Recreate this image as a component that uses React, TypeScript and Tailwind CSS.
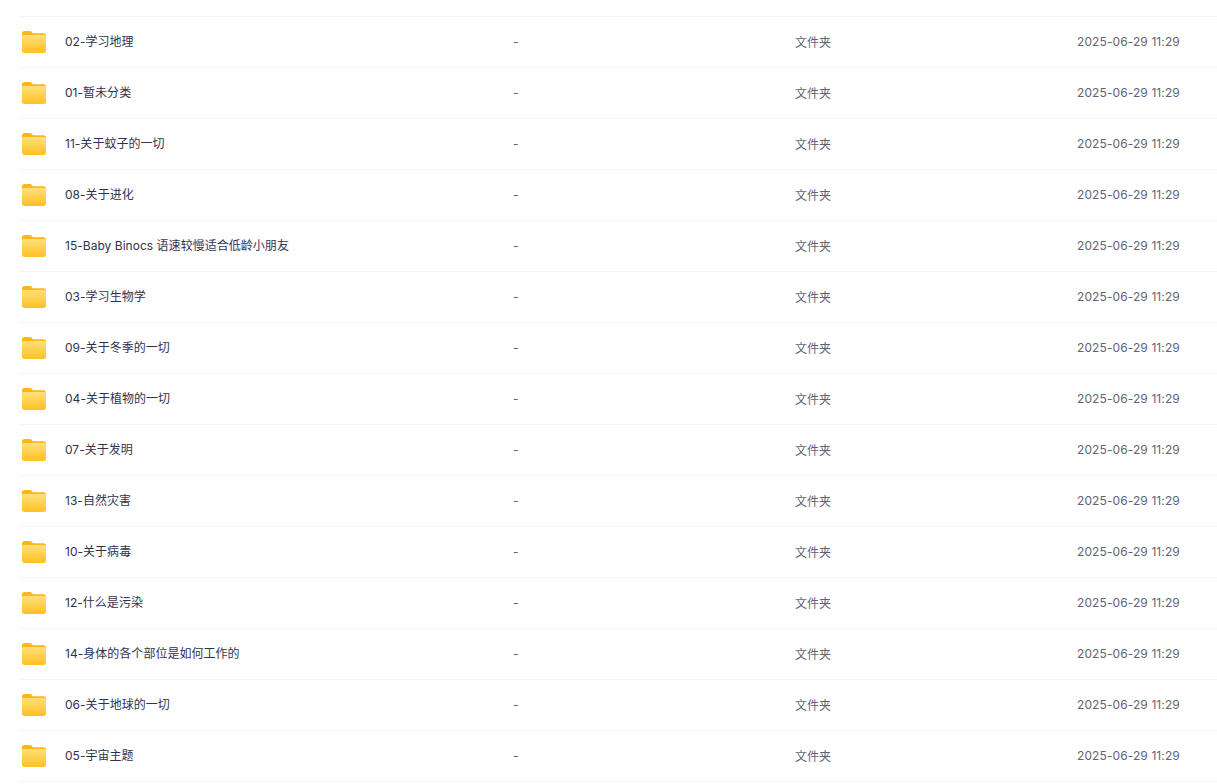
const FOLDERS = [
  "02-学习地理",
  "01-暂未分类",
  "11-关于蚊子的一切",
  "08-关于进化",
  "15-Baby Binocs 语速较慢适合低龄小朋友",
  "03-学习生物学",
  "09-关于冬季的一切",
  "04-关于植物的一切",
  "07-关于发明",
  "13-自然灾害",
  "10-关于病毒",
  "12-什么是污染",
  "14-身体的各个部位是如何工作的",
  "06-关于地球的一切",
  "05-宇宙主题",
];

function FolderIcon() {
  return (
    <svg width="26" height="24" viewBox="0 0 26 24" fill="none">
      <defs>
        <linearGradient id="folderFront" x1="0" y1="0" x2="0" y2="1">
          <stop offset="0" stopColor="#ffe07a" />
          <stop offset="1" stopColor="#ffc022" />
        </linearGradient>
      </defs>
      <path
        d="M1 3.5C1 2.1 2 1 3.4 1h5.4c.9 0 1.6.4 2.1 1l1 1.2h10.7c1.4 0 2.4 1 2.4 2.4V10H1z"
        fill="#ffb516"
      />
      <path
        d="M1 6.6c0-.9.7-1.6 1.6-1.6h20.8c.9 0 1.6.7 1.6 1.6v14C25 22 24 23 22.6 23H3.4C2 23 1 22 1 20.6z"
        fill="url(#folderFront)"
      />
    </svg>
  );
}

export default function App() {
  return (
    <main className="min-h-[784px] overflow-hidden bg-white pt-4 pl-[18px] font-['Inter','Noto_Sans_CJK_SC',sans-serif] text-xs">
      <div className="border-t border-[#f5f5f6]">
        {FOLDERS.map((name) => (
          <div key={name} className="flex h-[51px] items-center border-b border-[#f5f5f6]">
            <div className="flex w-[47px] shrink-0 items-center pl-[3px]">
              <FolderIcon />
            </div>
            <div className="w-[448px] shrink-0 tracking-[0.03px] text-[#2f3350]">{name}</div>
            <div className="w-[282px] shrink-0 text-[#5f6475]">-</div>
            <div className="w-[282px] shrink-0 pt-px text-[#5f6475]">文件夹</div>
            <div className="whitespace-nowrap tracking-[0.1px] text-[#5f6475]">2025-06-29 11:29</div>
          </div>
        ))}
      </div>
    </main>
  );
}
